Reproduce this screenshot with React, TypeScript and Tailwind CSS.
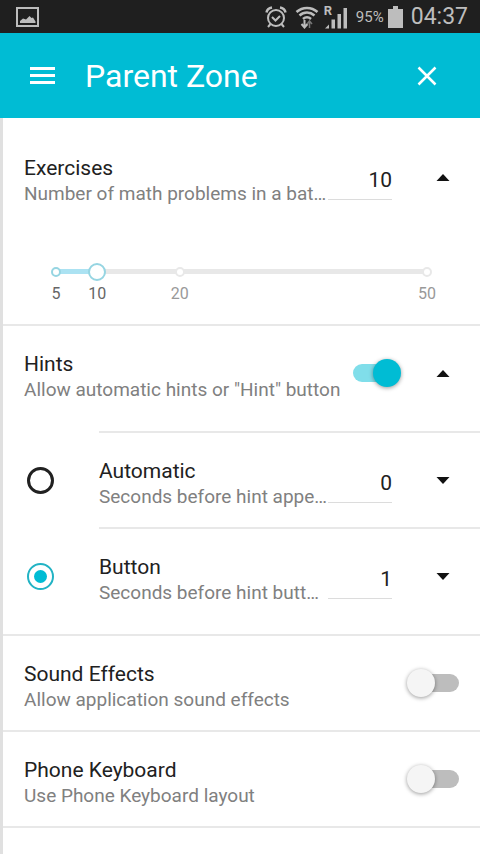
import { useState } from 'react';
import type { InputHTMLAttributes, ReactNode } from 'react';

const MIN = 5;
const MAX = 50;
const STOPS = [5, 10, 20, 50];

const toPercent = (value: number) => `${((value - MIN) / (MAX - MIN)) * 100}%`;

const StatusBar = () => (
  <div className="flex h-[33px] items-center bg-[#1f1f1f] pl-4 pr-3 text-[#bdbdbd]">
    <svg width="23" height="20" viewBox="0 0 23 20" fill="none">
      <rect x="1" y="1" width="21" height="18" stroke="currentColor" strokeWidth="2" />
      <path d="M4 16v-2l3-2.500 3 1L13.500 9l2 2 1.500-.5 2.500 4V16z" fill="currentColor" />
    </svg>
    <div className="ml-auto flex items-center">
      <svg width="22" height="24" viewBox="0 0 22 24" fill="none" stroke="currentColor" strokeWidth="2">
        <circle cx="11" cy="13" r="8" />
        <path d="M7 12l3.500 3.500L15 11" />
        <path d="M1.500 7.500C2 4.500 4 3 7 2.500M20.500 7.500C20 4.500 18 3 15 2.500" strokeWidth="2.500" />
        <path d="M5.500 19l-2.500 3M16.500 19l2.500 3" />
      </svg>
      <svg className="ml-2" width="24" height="24" viewBox="0 0 24 24" fill="none" stroke="currentColor" strokeWidth="2.500">
        <path d="M1.500 7c6-5.500 15-5.500 21 0M4.500 10.500c4.500-4 10.500-4 15 0M8 14c2.500-2.200 5.500-2.200 8 0" />
        <path d="M9.500 15v6M6.500 19l3 3.500 3-3.500" strokeWidth="2" />
        <path d="M14.500 23v-6M12 19l2.500-3 2.500 3" stroke="#777777" strokeWidth="1.500" />
      </svg>
      <div className="relative ml-[5px]">
        <span className="absolute left-0 top-0 text-[13px] font-bold leading-[12px]">R</span>
        <svg width="24" height="24" viewBox="0 0 24 24" fill="currentColor">
          <path d="M1 23.500l4-4v4zM7.500 14.500h3.500v9H7.500zM13.500 9h3.500v14.500h-3.500zM19.500 3h3.500v20.500h-3.500z" />
        </svg>
      </div>
      <span className="ml-2 text-[15px] leading-[24px]">95%</span>
      <svg className="ml-1" width="15" height="22" viewBox="0 0 15 22" fill="currentColor">
        <path d="M5 0h5v3h5v19H0V3h5z" />
      </svg>
      <span className="ml-2 text-[23px] leading-[32px]">04:37</span>
    </div>
  </div>
);

const Header = () => (
  <header className="flex h-[85px] items-center bg-[#00bcd4] pl-[30px] pr-[43px] text-white">
    <button type="button" aria-label="Menu">
      <svg width="25" height="17" viewBox="0 0 25 17" fill="currentColor">
        <path d="M0 0h25v3H0zM0 7h25v3H0zM0 14h25v3H0z" />
      </svg>
    </button>
    <h1 className="ml-[30px] text-[32px] leading-[40px]">Parent Zone</h1>
    <button type="button" aria-label="Close" className="ml-auto">
      <svg width="20" height="20" viewBox="0 0 20 20" stroke="currentColor" strokeWidth="2.500">
        <path d="M1.500 1.500l17 17M18.500 1.500l-17 17" />
      </svg>
    </button>
  </header>
);

type RowProps = {
  id: string;
  title: string;
  description: string;
  divider?: boolean;
  children: ReactNode;
};

const Row = ({ id, title, description, divider = true, children }: RowProps) => (
  <div
    className={`flex min-h-24 min-w-0 flex-1 items-center border-t-2 pr-[21px] ${
      divider ? 'border-[#e8e8e8]' : 'border-transparent'
    }`}
  >
    <label htmlFor={id} className="min-w-0 flex-1 whitespace-nowrap pt-2">
      <span className="block text-[21px] leading-[26px] text-[#212121]">{title}</span>
      <span className="block text-[19px] leading-[26px] text-[#808080]">{description}</span>
    </label>
    {children}
  </div>
);

const Switch = (props: InputHTMLAttributes<HTMLInputElement>) => (
  <input
    type="checkbox"
    role="switch"
    className="relative h-[18px] w-[46px] shrink-0 appearance-none rounded-full bg-[#bdbdbd] before:absolute before:-left-[6px] before:-top-[5px] before:size-7 before:rounded-full before:bg-[#f5f5f5] before:shadow-[0_1px_4px_rgba(0,0,0,0.4)] checked:bg-[#80deea] checked:before:left-5 checked:before:bg-[#00bcd4]"
    {...props}
  />
);

const NumberField = (props: InputHTMLAttributes<HTMLInputElement>) => (
  <input
    type="text"
    inputMode="numeric"
    className="mr-[7px] h-[46px] w-16 shrink-0 border-b border-[#dcdcdc] bg-transparent pt-1.5 text-right text-[21px] leading-[26px] text-[#212121] outline-none"
    {...props}
  />
);

const Toggle = ({ label, initial = false }: { label: string; initial?: boolean }) => {
  const [open, setOpen] = useState(initial);

  return (
    <button
      type="button"
      aria-label={label}
      aria-expanded={open}
      onClick={() => setOpen(!open)}
      className="ml-7 flex size-8 shrink-0 items-center justify-center text-[#111111]"
    >
      <svg width="14" height="7" viewBox="0 0 14 7" fill="currentColor">
        <path d={open ? 'M.5 7L7 0l6.500 7z' : 'M.5 0L7 7l6.500-7z'} />
      </svg>
    </button>
  );
};

type SliderProps = {
  value: number;
  onChange: (value: number) => void;
};

const Slider = ({ value, onChange }: SliderProps) => (
  <div className="relative ml-8 mr-[32px] h-[100px]">
    <div className="absolute inset-x-0 top-[45px] h-[5px] bg-[#e8e8e8]">
      <div className="h-full bg-[#abe2f2]" style={{ width: toPercent(value) }} />
    </div>
    {STOPS.map((stop) => (
      <div
        key={stop}
        className="absolute top-[43px] flex w-8 -translate-x-1/2 flex-col items-center"
        style={{ left: toPercent(stop) }}
      >
        <span
          className={`size-[10px] rounded-full border-2 bg-white ${
            stop <= value ? 'border-[#96d5e2]' : 'border-[#e8e8e8]'
          }`}
        />
        <span
          className={`mt-[7px] text-[16px] leading-5 ${
            stop <= value ? 'text-[#666666]' : 'text-[#999999]'
          }`}
        >
          {stop}
        </span>
      </div>
    ))}
    <input
      type="range"
      aria-label="Number of exercises"
      min={MIN}
      max={MAX}
      value={value}
      onChange={(e) => onChange(Number(e.target.value))}
      className="absolute -left-[9px] top-[39px] h-[18px] w-[calc(100%+18px)] appearance-none bg-transparent [&::-webkit-slider-thumb]:size-[18px] [&::-webkit-slider-thumb]:appearance-none [&::-webkit-slider-thumb]:rounded-full [&::-webkit-slider-thumb]:border-2 [&::-webkit-slider-thumb]:border-solid [&::-webkit-slider-thumb]:border-[#96d5e2] [&::-webkit-slider-thumb]:bg-white"
    />
  </div>
);

type HintOptionProps = {
  id: string;
  title: string;
  description: string;
  seconds: number;
  checked?: boolean;
};

const HintOption = ({ id, title, description, seconds, checked }: HintOptionProps) => (
  <div className="flex">
    <div className="flex w-24 shrink-0 items-center pl-6 pt-0.5">
      <input
        type="radio"
        name="hint"
        aria-label={title}
        defaultChecked={checked}
        className="flex size-[27px] appearance-none items-center justify-center rounded-full border-[3px] border-[#212121] before:size-[13px] before:rounded-full checked:border-2 checked:border-[#22b3c4] checked:before:bg-[#00bcd4]"
      />
    </div>
    <Row id={id} title={title} description={description}>
      <NumberField id={id} defaultValue={seconds} />
      <Toggle label={`${title} options`} />
    </Row>
  </div>
);

export default function App() {
  const [exercises, setExercises] = useState(10);

  return (
    <div className="flex min-h-screen flex-col bg-white font-['Roboto',sans-serif]">
      <StatusBar />
      <Header />
      <main className="flex-1 border-l-[3px] border-[#e0e0e0]">
        <section className="pl-[21px] pt-[10px]">
          <Row
            id="exercises"
            title="Exercises"
            description="Number of math problems in a bat…"
            divider={false}
          >
            <NumberField
              id="exercises"
              value={exercises}
              onChange={(e) => setExercises(Number(e.target.value) || MIN)}
            />
            <Toggle label="Exercises options" initial />
          </Row>
          <div className="pr-[21px]">
            <Slider value={exercises} onChange={setExercises} />
          </div>
        </section>

        <section className="pb-[11px]">
          <div className="border-t-2 border-[#e8e8e8] pb-[11px] pl-[21px]">
            <div className="-mt-0.5 flex">
              <Row
                id="hints"
                title="Hints"
                description={'Allow automatic hints or "Hint" button'}
                divider={false}
              >
                <Switch id="hints" defaultChecked />
                <Toggle label="Hints options" initial />
              </Row>
            </div>
          </div>
          <HintOption
            id="automatic"
            title="Automatic"
            description="Seconds before hint appe…"
            seconds={0}
          />
          <HintOption
            id="button"
            title="Button"
            description="Seconds before hint butt…"
            seconds={1}
            checked
          />
        </section>

        <section className="divide-y-2 divide-[#e8e8e8] border-y-2 border-[#e8e8e8]">
          <div className="-mt-0.5 flex pl-[21px]">
            <Row
              id="sound"
              title="Sound Effects"
              description="Allow application sound effects"
              divider={false}
            >
              <Switch id="sound" />
            </Row>
          </div>
          <div className="-mt-0.5 flex pl-[21px]">
            <Row
              id="keyboard"
              title="Phone Keyboard"
              description="Use Phone Keyboard layout"
              divider={false}
            >
              <Switch id="keyboard" />
            </Row>
          </div>
        </section>
      </main>
    </div>
  );
}
